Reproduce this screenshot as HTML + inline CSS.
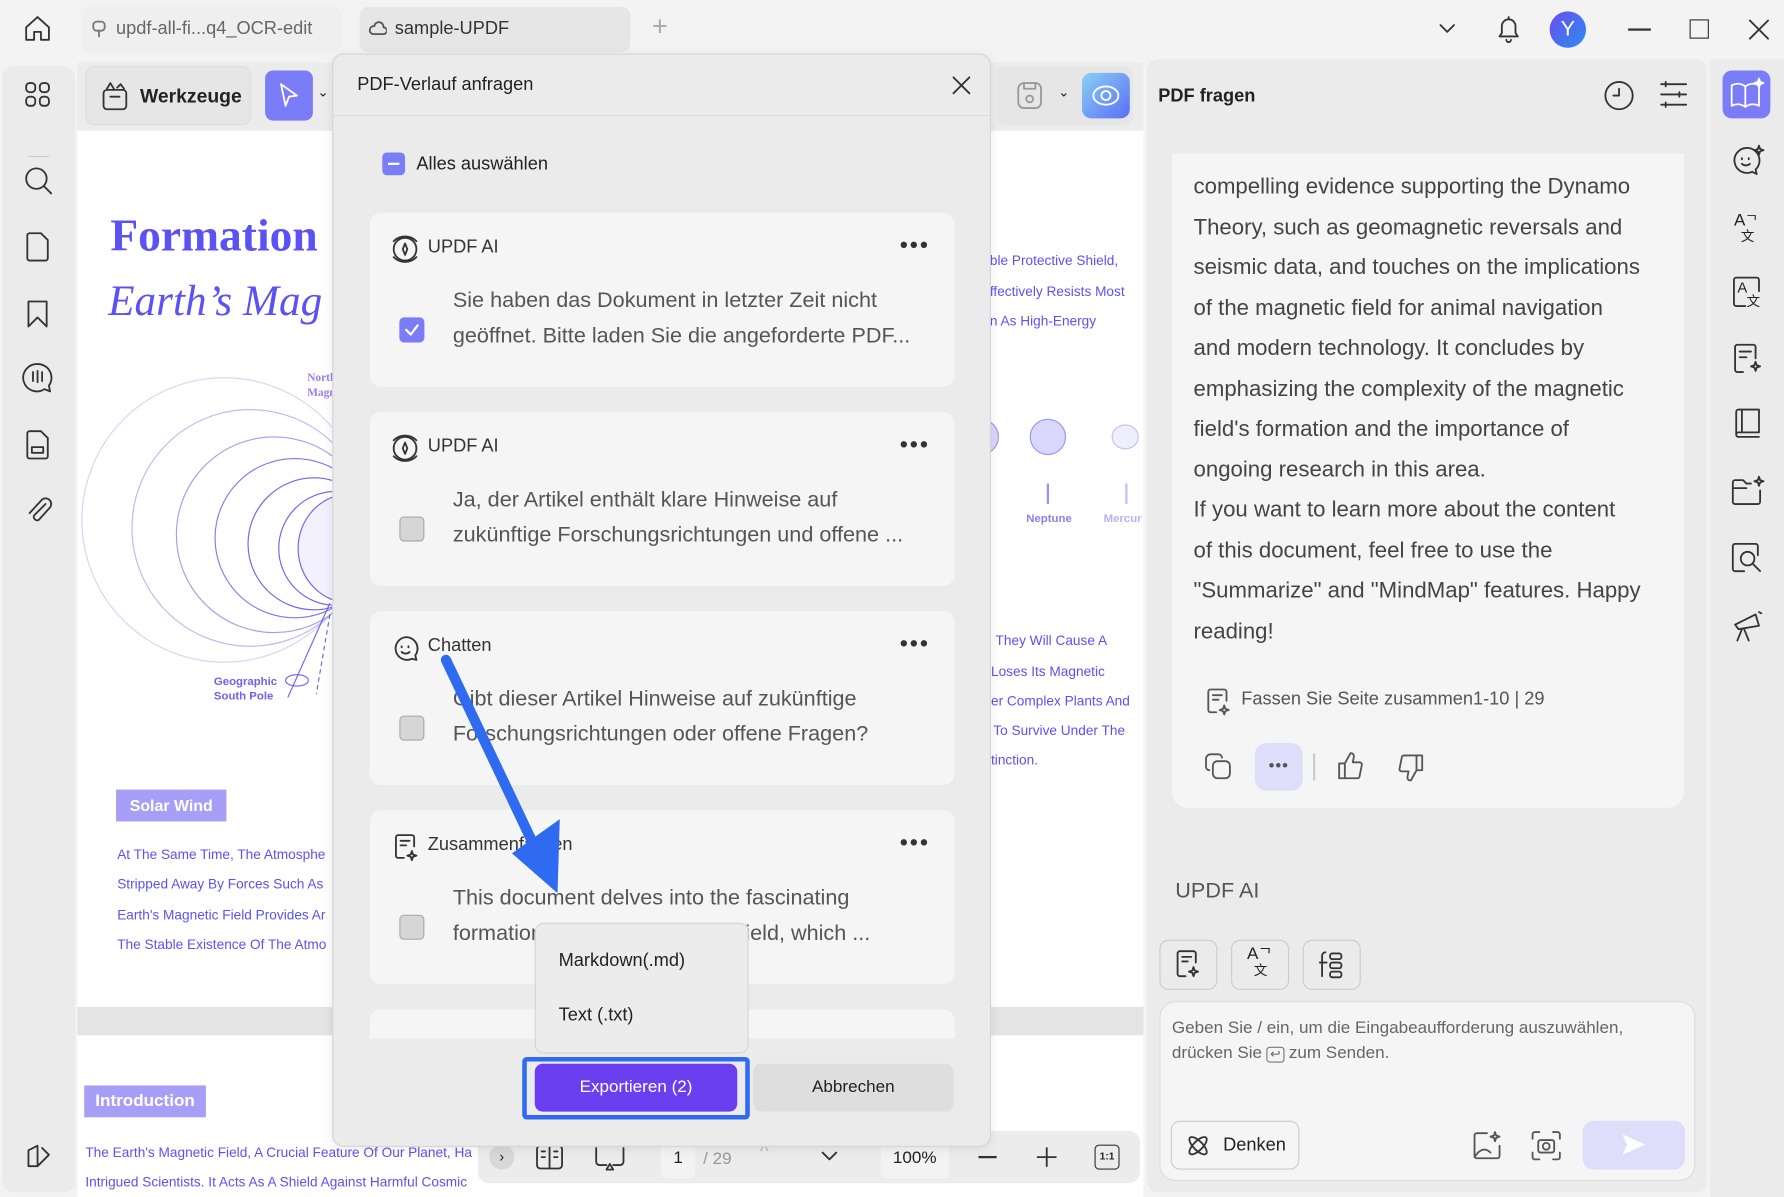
<!DOCTYPE html>
<html><head><meta charset="utf-8">
<style>
*{box-sizing:border-box;margin:0;padding:0}
html,body{width:1784px;height:1197px;overflow:hidden;background:#f3f3f4}
#w{position:absolute;left:0;top:0;width:1568px;height:1052px;transform:scale(1.13776);transform-origin:0 0;font-family:"Liberation Sans",sans-serif;color:#222;background:#f3f3f4}
.a{position:absolute}
.ic{position:absolute;fill:none;stroke:#333;stroke-width:1.6;stroke-linecap:round;stroke-linejoin:round}
.pl{color:#5b52f5;font-size:12px;position:absolute;white-space:nowrap}
.card{position:absolute;left:325px;width:514px;background:#f5f5f5;border-radius:10px}
.card .t{position:absolute;left:51px;top:22px;font-size:16px;color:#333}
.card .b{position:absolute;left:73px;top:62px;font-size:19px;color:#555;line-height:31px;white-space:nowrap}
.card .dots{position:absolute;right:22px;top:20px;font-size:13px;letter-spacing:1px;color:#333}
.cb{position:absolute;left:26px;top:92px;width:22px;height:22px;border:1.5px solid #aaa;background:#d6d6d6;border-radius:4px}
.rt{font-size:19.5px;color:#444;line-height:35.5px;white-space:nowrap}
</style></head><body><div id="w">
<!-- top bar -->
<svg class="ic" style="left:20px;top:12px" width="26" height="26" viewBox="0 0 26 26"><path d="M3 12 13 3l10 9v11H16v-7h-6v7H3z"/></svg>
<div class="a" style="left:72px;top:6px;width:228px;height:40px;background:#efefef;border-radius:8px"></div>
<svg class="ic" style="left:80px;top:18px;stroke:#777" width="14" height="16"><rect x="2" y="1" width="10" height="8" rx="3"/><path d="M7 9v5"/></svg>
<div class="a" style="left:102px;top:17px;font-size:16px;color:#666">updf-all-fi...q4_OCR-edit</div>
<div class="a" style="left:316px;top:6px;width:238px;height:40px;background:#e6e6e6;border-radius:8px"></div>
<svg class="ic" style="left:324px;top:18px;stroke:#555" width="16" height="14"><path d="M4 12h9a3 3 0 0 0 0-6 4 4 0 0 0-8-1 3 3 0 0 0-1 7z"/></svg>
<div class="a" style="left:347px;top:17px;font-size:16px;color:#333">sample-UPDF</div>
<div class="a" style="left:573px;top:10px;font-size:24px;color:#aaa">+</div>
<svg class="ic" style="left:1263px;top:18px" width="18" height="14"><path d="M3 4l6 6 6-6"/></svg>
<svg class="ic" style="left:1313px;top:12px" width="26" height="28"><path d="M5 20h16l-2-3v-6a6 6 0 0 0-12 0v6zM11 23a2 2 0 0 0 4 0M13 3v2"/></svg>
<div class="a" style="left:1362px;top:10px;width:32px;height:32px;border-radius:50%;background:linear-gradient(135deg,#6c4cf2,#2a8ef0);color:#fff;font-size:19px;text-align:center;line-height:32px">Y</div>
<div class="a" style="left:1431px;top:25px;width:20px;height:1.6px;background:#333"></div>
<div class="a" style="left:1485px;top:17px;width:17px;height:17px;border:1.6px solid #333"></div>
<svg class="ic" style="left:1536px;top:16px" width="20" height="20"><path d="M2 2l16 16M18 2 2 18"/></svg>

<!-- left sidebar -->
<div class="a" style="left:2px;top:58px;width:64px;height:990px;background:#ebebeb;border-radius:10px"></div>
<svg class="ic" style="left:21px;top:71px" width="24" height="24"><rect x="2" y="2" width="8" height="8" rx="3"/><rect x="14" y="2" width="8" height="8" rx="3"/><rect x="2" y="14" width="8" height="8" rx="3"/><rect x="14" y="14" width="8" height="8" rx="3"/></svg>
<div class="a" style="left:25px;top:137px;width:18px;height:1px;background:#ccc"></div>
<svg class="ic" style="left:20px;top:145px" width="28" height="28"><circle cx="12" cy="12" r="9"/><path d="M19 19l6 6"/></svg>
<svg class="ic" style="left:21px;top:203px" width="24" height="28"><path d="M3 4a2 2 0 0 1 2-2h10l6 6v16a2 2 0 0 1-2 2H5a2 2 0 0 1-2-2z"/></svg>
<svg class="ic" style="left:22px;top:262px" width="22" height="28"><path d="M3 3h16v22l-8-8-8 8z"/></svg>
<svg class="ic" style="left:19px;top:318px" width="28" height="28"><path d="M14 2a12 12 0 1 0 6 22l5 2-1-5A12 12 0 0 0 14 2zM10 9v8M14 8v10M18 9v8"/></svg>
<svg class="ic" style="left:21px;top:377px" width="24" height="28"><path d="M3 4a2 2 0 0 1 2-2h10l6 6v16a2 2 0 0 1-2 2H5a2 2 0 0 1-2-2zM7 16h10v5H7z"/></svg>
<svg class="ic" style="left:22px;top:435px" width="24" height="28"><path d="M18 8 8 18a3 3 0 0 0 4 4l10-11a5 5 0 0 0-7-7L4 16"/></svg>
<svg class="ic" style="left:21px;top:1003px" width="26" height="26"><path d="M4 22V8l8-4v18zM12 22l10-10-6-6"/></svg>

<!-- toolbar -->
<div class="a" style="left:68px;top:55px;width:937px;height:60px;background:#ececec"></div>
<div class="a" style="left:75px;top:58px;width:146px;height:52px;background:#e6e6e6;border:1px solid #ddd;border-radius:8px"></div>
<svg class="ic" style="left:88px;top:70px" width="26" height="28"><rect x="3" y="9" width="20" height="17" rx="3"/><path d="M9 15h8M6 8l3-5 3 5M15 7l3-3 3 4"/></svg>
<div class="a" style="left:123px;top:75px;font-size:17px;font-weight:bold">Werkzeuge</div>
<div class="a" style="left:233px;top:62px;width:42px;height:44px;background:#7b7cf7;border-radius:7px"></div>
<svg class="ic" style="left:243px;top:71px;stroke:#fff" width="22" height="26"><path d="M4 3l14 10-7 1-3 8z"/></svg>
<div class="a" style="left:279px;top:74px;font-size:12px">⌄</div>
<div class="a" style="left:876px;top:58px;width:120px;height:52px;background:#e6e6e6;border-radius:8px"></div>
<svg class="ic" style="left:893px;top:71px;stroke:#999" width="24" height="26"><rect x="2" y="2" width="20" height="22" rx="5"/><path d="M7 2v5h10V2"/><circle cx="12" cy="16" r="3"/></svg>
<div class="a" style="left:930px;top:74px;font-size:12px">⌄</div>
<div class="a" style="left:951px;top:64px;width:42px;height:40px;background:linear-gradient(135deg,#8ad1f5,#5a6ef5);border-radius:8px"></div>
<svg class="ic" style="left:956px;top:68px;stroke:#fff" width="32" height="32"><ellipse cx="16" cy="16" rx="11" ry="8"/><circle cx="16" cy="16" r="4"/></svg>

<!-- pdf page -->
<div class="a" style="left:68px;top:115px;width:937px;height:770px;background:#fff"></div>
<div class="a" style="left:68px;top:885px;width:937px;height:25px;background:#e4e4e4"></div>
<div class="a" style="left:68px;top:910px;width:937px;height:142px;background:#fff"></div>
<div class="a" style="left:97px;top:183px;font-family:'Liberation Serif',serif;font-size:40px;font-weight:bold;color:#5b52f5">Formation</div>
<div class="a" style="left:95px;top:243px;font-family:'Liberation Serif',serif;font-size:38px;font-style:italic;color:#5b52f5">Earth’s Mag</div>
<div class="pl" style="left:270px;top:326px;font-family:'Liberation Serif';font-size:10px;color:#9a7ff5;font-weight:bold;line-height:13px">North<br>Magn</div>
<svg class="a" style="left:68px;top:300px" width="224" height="330" viewBox="0 0 224 330" fill="none">
<g stroke-width="1">
<circle cx="129" cy="157" r="125" stroke="#d6d2fa"/>
<circle cx="152" cy="164" r="104" stroke="#bdb7f6"/>
<circle cx="173" cy="170" r="86" stroke="#a39cf3"/>
<circle cx="191" cy="173" r="70" stroke="#8078ef"/>
<circle cx="208" cy="178" r="58" stroke="#6d65ee"/>
<circle cx="227" cy="182" r="50" stroke="#6b62ef"/>
<ellipse cx="240" cy="182" rx="46" ry="48" stroke="#6b62ef" fill="#f2f1fd"/>
<path d="M222 230 185 313" stroke="#6b62ef"/>
<path d="M222 240 210 310" stroke="#6b62ef" stroke-dasharray="4 3"/>
<ellipse cx="193" cy="298" rx="10" ry="5" stroke="#6b62ef"/>
</g></svg>
<div class="pl" style="left:188px;top:593px;font-size:10px;font-weight:bold;color:#6b62ef;line-height:13px">Geographic<br>South Pole</div>
<div class="a" style="left:102px;top:694px;width:97px;height:28px;background:#a79ff7;color:#fff;font-weight:bold;font-size:14px;line-height:28px;text-align:center">Solar Wind</div>
<div class="pl" style="left:103px;top:744px">At The Same Time, The Atmosphe</div>
<div class="pl" style="left:103px;top:770px">Stripped Away By Forces Such As</div>
<div class="pl" style="left:103px;top:797px">Earth's Magnetic Field Provides Ar</div>
<div class="pl" style="left:103px;top:823px">The Stable Existence Of The Atmo</div>
<div class="a" style="left:74px;top:954px;width:107px;height:28px;background:#a79ff7;color:#fff;font-weight:bold;font-size:15px;line-height:28px;text-align:center">Introduction</div>
<div class="pl" style="left:75px;top:1006px">The Earth's Magnetic Field, A Crucial Feature Of Our Planet, Ha</div>
<div class="pl" style="left:75px;top:1032px">Intrigued Scientists. It Acts As A Shield Against Harmful Cosmic</div>
<div class="pl" style="left:870px;top:222px">ble Protective Shield,</div>
<div class="pl" style="left:870px;top:249px">ffectively Resists Most</div>
<div class="pl" style="left:870px;top:275px">n As High-Energy</div>
<div class="a" style="left:905px;top:368px;width:32px;height:32px;border-radius:50%;background:#d9d7fb;border:1.5px solid #9a93f2"></div>
<div class="a" style="left:977px;top:373px;width:24px;height:22px;border-radius:50%;background:#efeefd;border:1.5px solid #c4bff7"></div>
<div class="a" style="left:860px;top:368px;width:18px;height:32px;border-radius:0 16px 16px 0;background:#d9d7fb;border:1.5px solid #9a93f2;border-left:none"></div>
<div class="a" style="left:920px;top:425px;width:1.5px;height:18px;background:#9a93f2"></div>
<div class="a" style="left:989px;top:425px;width:1.5px;height:18px;background:#c4bff7"></div>
<div class="pl" style="left:902px;top:451px;font-size:10px;font-weight:bold;color:#8a82f0">Neptune</div>
<div class="pl" style="left:970px;top:451px;font-size:10px;font-weight:bold;color:#b8b2f5">Mercur</div>
<div class="pl" style="left:875px;top:556px">They Will Cause A</div>
<div class="pl" style="left:871px;top:583px">Loses Its Magnetic</div>
<div class="pl" style="left:871px;top:609px">er Complex Plants And</div>
<div class="pl" style="left:873px;top:635px">To Survive Under The</div>
<div class="pl" style="left:871px;top:661px">tinction.</div>

<!-- bottom toolbar -->
<div class="a" style="left:420px;top:994px;width:582px;height:46px;background:#ececec;border-radius:10px"></div>
<div class="a" style="left:430px;top:1006px;width:22px;height:22px;border-radius:50%;background:#d8d8d8;text-align:center;font-size:13px;line-height:22px">›</div>
<svg class="ic" style="left:470px;top:1005px" width="26" height="24"><rect x="2" y="2" width="22" height="20" rx="3"/><path d="M13 2v20M6 7h3M6 12h3M17 7h3M17 12h3"/></svg>
<svg class="ic" style="left:522px;top:1005px" width="28" height="26"><path d="M2 4v12a3 3 0 0 0 3 3h6M26 4v12a3 3 0 0 1-3 3h-6M14 18l-3 5h6z"/></svg>
<div class="a" style="left:581px;top:1000px;width:30px;height:36px;background:#f3f3f3;border-radius:6px;font-size:15px;text-align:center;line-height:36px">1</div>
<div class="a" style="left:618px;top:1010px;font-size:15px;color:#999">/ 29</div>
<div class="a" style="left:668px;top:1004px;font-size:16px;color:#bbb">^</div>
<svg class="ic" style="left:720px;top:1010px" width="18" height="14"><path d="M3 3l6 6 6-6"/></svg>
<div class="a" style="left:774px;top:1000px;width:60px;height:36px;background:#f3f3f3;border-radius:6px;font-size:15px;text-align:center;line-height:36px">100%</div>
<div class="a" style="left:860px;top:1016px;width:16px;height:1.6px;background:#333"></div>
<svg class="ic" style="left:910px;top:1007px" width="20" height="20"><path d="M10 2v16M2 10h16"/></svg>
<div class="a" style="left:962px;top:1006px;width:22px;height:22px;border:1.6px solid #333;border-radius:4px;font-size:9px;text-align:center;line-height:19px;font-weight:bold">1:1</div>

<!-- dialog -->
<div class="a" style="left:292px;top:47px;width:579px;height:961px;background:#ebebeb;border:1px solid #d5d5d5;border-radius:10px;box-shadow:0 2px 10px rgba(0,0,0,.08)"></div>
<div class="a" style="left:293px;top:101px;width:577px;height:1px;background:#dcdcdc"></div>
<div class="a" style="left:314px;top:66px;font-size:16px;color:#222">PDF-Verlauf anfragen</div>
<svg class="ic" style="left:836px;top:66px" width="18" height="18"><path d="M2 2l14 14M16 2 2 16"/></svg>
<div class="a" style="left:336px;top:134px;width:20px;height:20px;background:#7b7cf7;border-radius:4px"></div>
<div class="a" style="left:341px;top:143px;width:10px;height:2px;background:#fff"></div>
<div class="a" style="left:366px;top:136px;font-size:16px">Alles auswählen</div>

<div class="card" style="top:187px;height:153px">
<svg class="ic" style="left:15px;top:15px" width="32" height="34"><circle cx="16" cy="17" r="10"/><path d="M6 10a14 14 0 0 1 20 0M6 24a14 14 0 0 0 20 0M16 12l2 5-2 5-2-5z"/></svg>
<div class="t">UPDF AI</div><div class="dots">●●●</div>
<div class="cb" style="background:#7b7cf7;border-color:#7b7cf7"></div>
<svg class="ic" style="left:30px;top:97px;stroke:#fff;stroke-width:2" width="14" height="12"><path d="M2 6l4 4 6-8"/></svg>
<div class="b">Sie haben das Dokument in letzter Zeit nicht<br>geöffnet. Bitte laden Sie die angeforderte PDF...</div>
</div>
<div class="card" style="top:362px;height:153px">
<svg class="ic" style="left:15px;top:15px" width="32" height="34"><circle cx="16" cy="17" r="10"/><path d="M6 10a14 14 0 0 1 20 0M6 24a14 14 0 0 0 20 0M16 12l2 5-2 5-2-5z"/></svg>
<div class="t">UPDF AI</div><div class="dots">●●●</div><div class="cb"></div>
<div class="b">Ja, der Artikel enthält klare Hinweise auf<br>zukünftige Forschungsrichtungen und offene ...</div>
</div>
<div class="card" style="top:537px;height:153px">
<svg class="ic" style="left:20px;top:21px" width="24" height="24"><path d="M12 2a10 10 0 1 0 5 19l4 1-1-4a10 10 0 0 0-8-16zM8 10v1M14 10v1M8 15a5 5 0 0 0 7 0"/></svg>
<div class="t">Chatten</div><div class="dots">●●●</div><div class="cb"></div>
<div class="b">Gibt dieser Artikel Hinweise auf zukünftige<br>Forschungsrichtungen oder offene Fragen?</div>
</div>
<div class="card" style="top:712px;height:153px">
<svg class="ic" style="left:20px;top:20px" width="24" height="26"><path d="M10 22H5a2 2 0 0 1-2-2V4a2 2 0 0 1 2-2h12a2 2 0 0 1 2 2v8M7 7h8M7 11h5M17 16l1 3 3 1-3 1-1 3-1-3-3-1 3-1z"/></svg>
<div class="t">Zusammenfassen</div><div class="dots">●●●</div><div class="cb"></div>
<div class="b">This document delves into the fascinating<br>formation of Earth's magnetic field, which ...</div>
</div>
<div class="card" style="top:887px;height:26px;border-radius:10px 10px 0 0"></div>
<div class="a" style="left:470px;top:811px;width:188px;height:115px;background:#ececec;border:1px solid #d5d5d5;border-radius:8px"></div>
<div class="a" style="left:491px;top:836px;font-size:16px">Markdown(.md)</div>
<div class="a" style="left:491px;top:884px;font-size:16px">Text (.txt)</div>
<div class="a" style="left:459px;top:929px;width:200px;height:55px;border:4px solid #2f6bf0;border-radius:4px"></div>
<div class="a" style="left:470px;top:935px;width:178px;height:42px;background:#6a3ff0;border-radius:7px;color:#fff;font-size:15px;text-align:center;line-height:42px">Exportieren (2)</div>
<div class="a" style="left:662px;top:935px;width:176px;height:42px;background:#dedede;border-radius:7px;color:#222;font-size:15px;text-align:center;line-height:42px">Abbrechen</div>
<svg class="a" style="left:380px;top:570px" width="130" height="220"><path d="M12 10 L95 185" stroke="#2f6bf0" stroke-width="9" stroke-linecap="round"/><path d="M70 180 L110 215 L112 150 Z" fill="#2f6bf0"/></svg>

<!-- right panel -->
<div class="a" style="left:1008px;top:52px;width:492px;height:996px;background:#ebebeb;border-radius:10px"></div>
<div class="a" style="left:1018px;top:76px;font-size:16px;font-weight:bold">PDF fragen</div>
<svg class="ic" style="left:1409px;top:70px" width="28" height="28"><circle cx="14" cy="14" r="12"/><path d="M14 8v6h-5"/></svg>
<svg class="ic" style="left:1458px;top:70px" width="26" height="26"><path d="M2 4h22M2 13h22M2 22h22M6 2v4M18 11v4M6 20v4"/></svg>
<div class="a" style="left:1030px;top:135px;width:450px;height:575px;background:#f5f5f5;border-radius:0 0 14px 14px"></div>
<div class="a rt" style="left:1049px;top:147px">compelling evidence supporting the Dynamo<br>Theory, such as geomagnetic reversals and<br>seismic data, and touches on the implications<br>of the magnetic field for animal navigation<br>and modern technology. It concludes by<br>emphasizing the complexity of the magnetic<br>field's formation and the importance of<br>ongoing research in this area.<br>If you want to learn more about the content<br>of this document, feel free to use the<br>"Summarize" and "MindMap" features. Happy<br>reading!</div>
<svg class="ic" style="left:1059px;top:604px;stroke:#555" width="24" height="26"><path d="M10 22H5a2 2 0 0 1-2-2V4a2 2 0 0 1 2-2h12a2 2 0 0 1 2 2v8M7 7h8M7 11h5M17 16l1 3 3 1-3 1-1 3-1-3-3-1 3-1z"/></svg>
<div class="a" style="left:1091px;top:606px;font-size:16px;color:#555">Fassen Sie Seite zusammen1-10 | 29</div>
<svg class="ic" style="left:1058px;top:661px;stroke:#555" width="26" height="26"><rect x="8" y="8" width="15" height="15" rx="4"/><path d="M16 5a3 3 0 0 0-3-3H6a4 4 0 0 0-4 4v7a3 3 0 0 0 3 3"/></svg>
<div class="a" style="left:1103px;top:653px;width:42px;height:42px;background:#dedefb;border-radius:10px;text-align:center;line-height:38px;font-size:14px;font-weight:bold;color:#555;letter-spacing:1px">•••</div>
<div class="a" style="left:1154px;top:662px;width:2px;height:24px;background:#ccc"></div>
<svg class="ic" style="left:1174px;top:660px;stroke:#555" width="26" height="26"><path d="M8 11v13H3V11zM8 11l5-9c2 0 3 1 3 3l-1 5h6a2 2 0 0 1 2 2l-2 10a2 2 0 0 1-2 2H8"/></svg>
<svg class="ic" style="left:1227px;top:662px;stroke:#555" width="26" height="26"><path d="M18 15V2h5v13zM18 15l-5 9c-2 0-3-1-3-3l1-5H5a2 2 0 0 1-2-2L5 4a2 2 0 0 1 2-2h11"/></svg>
<div class="a" style="left:1033px;top:773px;font-size:19px;color:#555">UPDF AI</div>
<div class="a" style="left:1019px;top:826px;width:51px;height:44px;border:1px solid #ccc;border-radius:8px;background:#ebebeb"></div>
<svg class="ic" style="left:1032px;top:834px" width="26" height="28"><path d="M10 24H5a2 2 0 0 1-2-2V4a2 2 0 0 1 2-2h12a2 2 0 0 1 2 2v8M7 7h8M7 11h5M17 16l1 3 3 1-3 1-1 3-1-3-3-1 3-1z"/></svg>
<div class="a" style="left:1082px;top:826px;width:51px;height:44px;border:1px solid #ccc;border-radius:8px"></div>
<div class="a" style="left:1096px;top:832px;font-size:15px;line-height:14px">A<span style="font-size:13px">ᄀ</span><br><span style="font-family:'Noto Sans CJK SC';font-size:12px;margin-left:6px">文</span></div>
<div class="a" style="left:1145px;top:826px;width:51px;height:44px;border:1px solid #ccc;border-radius:8px"></div>
<svg class="ic" style="left:1158px;top:834px" width="26" height="28"><path d="M7 3a3 3 0 0 0-3 3v18M2 12h6"/><rect x="11" y="4" width="10" height="5" rx="2"/><rect x="11" y="12" width="10" height="5" rx="2"/><rect x="11" y="20" width="10" height="5" rx="2"/></svg>
<div class="a" style="left:1019px;top:880px;width:471px;height:158px;background:#f5f5f5;border:1px solid #ddd;border-radius:14px"></div>
<div class="a" style="left:1030px;top:893px;font-size:15px;color:#666;line-height:22px">Geben Sie / ein, um die Eingabeaufforderung auszuwählen,<br>drücken Sie <span style="border:1.3px solid #777;border-radius:3px;font-size:11px;padding:0 2px">↩</span> zum Senden.</div>
<div class="a" style="left:1029px;top:985px;width:113px;height:43px;border:1px solid #ccc;border-radius:8px"></div>
<svg class="ic" style="left:1041px;top:995px" width="24" height="24"><ellipse cx="12" cy="12" rx="10" ry="4" transform="rotate(45 12 12)"/><ellipse cx="12" cy="12" rx="10" ry="4" transform="rotate(-45 12 12)"/></svg>
<div class="a" style="left:1075px;top:998px;font-size:16px">Denken</div>
<svg class="ic" style="left:1293px;top:993px;stroke:#555" width="28" height="28"><path d="M14 3H5a2 2 0 0 0-2 2v18a2 2 0 0 0 2 2h18a2 2 0 0 0 2-2v-9M3 24c5-8 10-8 14-4M21 2l1 3 3 1-3 1-1 3-1-3-3-1 3-1z"/></svg>
<svg class="ic" style="left:1345px;top:993px;stroke:#555" width="28" height="28"><path d="M2 8V4a2 2 0 0 1 2-2h4M20 2h4a2 2 0 0 1 2 2v4M26 20v4a2 2 0 0 1-2 2h-4M8 26H4a2 2 0 0 1-2-2v-4"/><rect x="7" y="9" width="14" height="11" rx="2"/><circle cx="14" cy="14.5" r="3"/></svg>
<div class="a" style="left:1391px;top:985px;width:90px;height:43px;background:#dedefb;border-radius:10px"></div>
<svg class="a" style="left:1424px;top:995px" width="24" height="22"><path d="M2 2l20 9-20 9 4-9z" fill="#fff"/></svg>

<!-- far right strip -->
<div class="a" style="left:1503px;top:52px;width:65px;height:1000px;background:#ebebeb"></div>
<div class="a" style="left:1514px;top:62px;width:42px;height:42px;background:#7b7cf7;border-radius:8px"></div>
<svg class="ic" style="left:1519px;top:68px;stroke:#fff" width="32" height="30"><path d="M3 7v18c4-2 8-2 12 1 4-3 8-3 12-1V7c-4-2-8-2-12 1-4-3-8-3-12-1zM15 8v18"/><path d="M27 1l1 3 3 1-3 1-1 3-1-3-3-1 3-1z" fill="#fff"/></svg>
<svg class="ic" style="left:1521px;top:127px" width="30" height="30"><path d="M14 3a11 11 0 1 0 5 21l4 2-1-4A11 11 0 0 0 14 3zM10 12v1M16 12v1M10 17a5 5 0 0 0 7 0M25 1l1 3 3 1-3 1-1 3-1-3-3-1 3-1z"/></svg>
<div class="a" style="left:1524px;top:187px;font-size:15px;line-height:13px">A<span style="font-size:12px">ᄀ</span><br><span style="font-family:'Noto Sans CJK SC';font-size:12px;margin-left:6px">文</span></div>
<svg class="ic" style="left:1522px;top:242px" width="28" height="30"><path d="M12 27H4a2 2 0 0 1-2-2V4a2 2 0 0 1 2-2h18a2 2 0 0 1 2 2v10"/></svg>
<div class="a" style="left:1527px;top:245px;font-size:13px">A</div>
<div class="a" style="left:1535px;top:256px;font-family:'Noto Sans CJK SC';font-size:12px">文</div>
<svg class="ic" style="left:1522px;top:301px" width="28" height="30"><path d="M10 26H5a2 2 0 0 1-2-2V4a2 2 0 0 1 2-2h14a2 2 0 0 1 2 2v10M7 8h10M7 13h6M21 17l1 3 3 1-3 1-1 3-1-3-3-1 3-1z"/></svg>
<svg class="ic" style="left:1522px;top:358px" width="28" height="30"><path d="M4 24V4a2 2 0 0 1 2-2h18v20H6a2 2 0 0 0 0 4h18M9 2v20"/></svg>
<svg class="ic" style="left:1521px;top:418px" width="30" height="28"><path d="M26 13v10a2 2 0 0 1-2 2H4a2 2 0 0 1-2-2V6a2 2 0 0 1 2-2h7l3 3h4M2 11h12M25 1l1 3 3 1-3 1-1 3-1-3-3-1 3-1z"/></svg>
<svg class="ic" style="left:1521px;top:476px" width="30" height="30"><path d="M12 26H4a2 2 0 0 1-2-2V4a2 2 0 0 1 2-2h18a2 2 0 0 1 2 2v8"/><circle cx="15" cy="15" r="6"/><path d="M20 20l6 6"/></svg>
<svg class="ic" style="left:1521px;top:535px" width="30" height="30"><path d="M4 14l18-9 3 10-18 3zM10 18l-4 10M12 18l4 10M25 3l2 1"/></svg>
</div></body></html>
